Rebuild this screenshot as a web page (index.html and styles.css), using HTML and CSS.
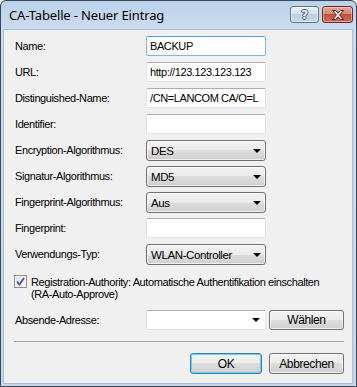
FILE: index.html
```html
<!DOCTYPE html>
<html>
<head>
<meta charset="utf-8">
<link rel="stylesheet" href="styles.css">
</head>
<body>
<div class="window">
  <div class="titlebar">
    <span class="title">CA-Tabelle - Neuer Eintrag</span>
    <div class="caption-btns">
      <div class="cbtn help"><span class="qmark">?</span></div>
      <div class="cbtn close">
        <svg width="16" height="12" viewBox="0 0 16 12"><path d="M2.5 1.5 L5.5 1.5 L8 4.2 L10.5 1.5 L13.5 1.5 L9.6 6 L13.5 10.5 L10.5 10.5 L8 7.8 L5.5 10.5 L2.5 10.5 L6.4 6 Z" fill="#ffffff" stroke="#4a1a14" stroke-width="1" stroke-linejoin="round"/></svg>
      </div>
    </div>
  </div>
  <div class="client">
    <div class="form">
      <span class="lbl">Name:</span><div class="edit focus">BACKUP</div>
      <span class="lbl">URL:</span><div class="edit">http://123.123.123.123</div>
      <span class="lbl">Distinguished-Name:</span><div class="edit">/CN=LANCOM CA/O=L</div>
      <span class="lbl">Identifier:</span><div class="edit"></div>
      <span class="lbl">Encryption-Algorithmus:</span><div class="combo"><span>DES</span><i class="arrow"></i></div>
      <span class="lbl">Signatur-Algorithmus:</span><div class="combo"><span>MD5</span><i class="arrow"></i></div>
      <span class="lbl">Fingerprint-Algorithmus:</span><div class="combo"><span>Aus</span><i class="arrow"></i></div>
      <span class="lbl">Fingerprint:</span><div class="edit"></div>
      <span class="lbl">Verwendungs-Typ:</span><div class="combo"><span>WLAN-Controller</span><i class="arrow"></i></div>
    </div>
    <div class="check-row">
      <div class="checkbox">
        <svg width="9" height="9" viewBox="0 0 9 9"><path d="M1 4.5 L3.5 7.5 L8 1" fill="none" stroke="#3a5aa8" stroke-width="1.8"/></svg>
      </div>
      <div class="check-text">Registration-Authority: Automatische Authentifikation einschalten<br>(RA-Auto-Approve)</div>
    </div>
    <div class="sender-row">
      <span class="lbl">Absende-Adresse:</span>
      <div class="edit ecombo"><i class="arrow"></i></div>
      <div class="btn">Wählen</div>
    </div>
    <div class="separator"></div>
    <div class="buttons">
      <div class="btn ok">OK</div>
      <div class="btn cancel">Abbrechen</div>
    </div>
  </div>
</div>
</body>
</html>
```
FILE: styles.css
```css
html, body {
  margin: 0;
  padding: 0;
  background: #ffffff;
}
.window {
  width: 357px;
  height: 387px;
  box-sizing: border-box;
  border: 1px solid #3a4656;
  border-radius: 6px 6px 0 0;
  background: linear-gradient(#bcd1eb 0px, #cddcf0 30px, #c6d8ee 100%);
  padding: 0 3px 2px 2px;
  display: flex;
  flex-direction: column;
  font-family: "Liberation Sans", Arial, sans-serif;
  font-size: 11px;
  letter-spacing: -0.4px;
  color: #000;
}
.titlebar {
  height: 28px;
  display: flex;
  align-items: flex-start;
  position: relative;
}
.title {
  font-family: "Noto Sans", "Liberation Sans", sans-serif;
  font-size: 13px;
  letter-spacing: -0.15px;
  color: #000;
  margin: 6px 0 0 6px;
  line-height: 17px;
}
.caption-btns {
  margin-left: auto;
  margin-top: 5px;
  display: flex;
  gap: 3px;
  margin-right: 0px;
}
.cbtn {
  height: 17px;
  box-sizing: border-box;
  border: 1px solid #5f7391;
  border-radius: 3px;
  display: flex;
  align-items: center;
  justify-content: center;
}
.help {
  width: 29px;
  background: linear-gradient(#e7eef7 0%, #d5e1f0 45%, #bccfe7 50%, #c5d7ec 100%);
  box-shadow: inset 0 0 0 1px rgba(255,255,255,0.6);
}
.qmark {
  font-family: "DejaVu Sans", sans-serif;
  font-weight: bold;
  font-size: 12px;
  color: #f4f6fa;
  line-height: 12px;
  text-shadow: 1px 0 0 #4d5a6c, -1px 0 0 #4d5a6c, 0 1px 0 #4d5a6c, 0 -1px 0 #4d5a6c;
}
.close {
  width: 31px;
  border-color: #6b2a22;
  background: linear-gradient(#e0a89c 0%, #d58877 45%, #c2513e 50%, #cf6b55 100%);
  box-shadow: inset 0 0 0 1px rgba(255,220,210,0.5);
}
.client {
  flex: 1;
  background: #f0f0f0;
  border: 1px solid #a9bdd6;
  display: flex;
  flex-direction: column;
}
.form {
  display: grid;
  grid-template-columns: 131px 120px;
  grid-auto-rows: 20px;
  row-gap: 6px;
  padding: 6px 0 0 11px;
}
.lbl {
  display: flex;
  align-items: center;
  white-space: nowrap;
}
.edit {
  box-sizing: border-box;
  height: 20px;
  width: 120px;
  background: #fff;
  border: 1px solid #e2e3ea;
  border-top-color: #abadb3;
  border-radius: 2px;
  padding: 0 3px;
  display: flex;
  align-items: center;
  white-space: nowrap;
  overflow: hidden;
}
.edit.focus {
  border-color: #7eb4ea;
  border-top-color: #569de5;
}
.combo {
  box-sizing: border-box;
  height: 21px;
  width: 120px;
  border: 1px solid #707070;
  border-radius: 3px;
  background: linear-gradient(#f2f2f2 0%, #ebebeb 50%, #dddddd 50%, #cfcfcf 100%);
  box-shadow: inset 0 0 0 1px rgba(255,255,255,0.7);
  display: flex;
  align-items: center;
  padding: 0 4px 0 4px;
  font-size: 11.5px;
}
.arrow {
  margin-left: auto;
  width: 0;
  height: 0;
  border-left: 4px solid transparent;
  border-right: 4px solid transparent;
  border-top: 4px solid #000;
  margin-right: 0px;
}
.check-row {
  display: flex;
  margin-top: 11px;
  padding-left: 10px;
}
.checkbox {
  width: 13px;
  height: 13px;
  box-sizing: border-box;
  border: 1px solid #8e8f8f;
  background: linear-gradient(135deg, #dcdcdc, #fdfdfd);
  box-shadow: inset 0 0 0 1px #f4f4f4;
  display: flex;
  align-items: center;
  justify-content: center;
  flex: none;
}
.check-text {
  margin-left: 4px;
  line-height: 12px;
  padding-top: 1px;
}
.sender-row {
  display: flex;
  align-items: center;
  margin-top: 10px;
  padding-left: 11px;
  height: 20px;
}
.sender-row .lbl {
  width: 131px;
}
.ecombo {
  padding-right: 5px;
}
.btn {
  box-sizing: border-box;
  height: 20px;
  width: 75px;
  border: 1px solid #707070;
  border-radius: 3px;
  background: linear-gradient(#f2f2f2 0%, #ebebeb 50%, #dddddd 50%, #cfcfcf 100%);
  box-shadow: inset 0 0 0 1px rgba(255,255,255,0.7);
  display: flex;
  align-items: center;
  justify-content: center;
  font-size: 12px;
}
.sender-row .btn {
  margin-left: 3px;
}
.separator {
  margin: 11px 8px 0 10px;
  height: 1px;
  background: #a0a0a0;
}
.buttons {
  display: flex;
  justify-content: flex-end;
  gap: 7px;
  margin-top: 11px;
  padding-right: 8px;
}
.buttons .btn {
  height: 21px;
}
.ok {
  width: 72px;
  border-color: #3c7fb1;
  box-shadow: inset 0 0 0 1px #5fd0f8;
}
```
